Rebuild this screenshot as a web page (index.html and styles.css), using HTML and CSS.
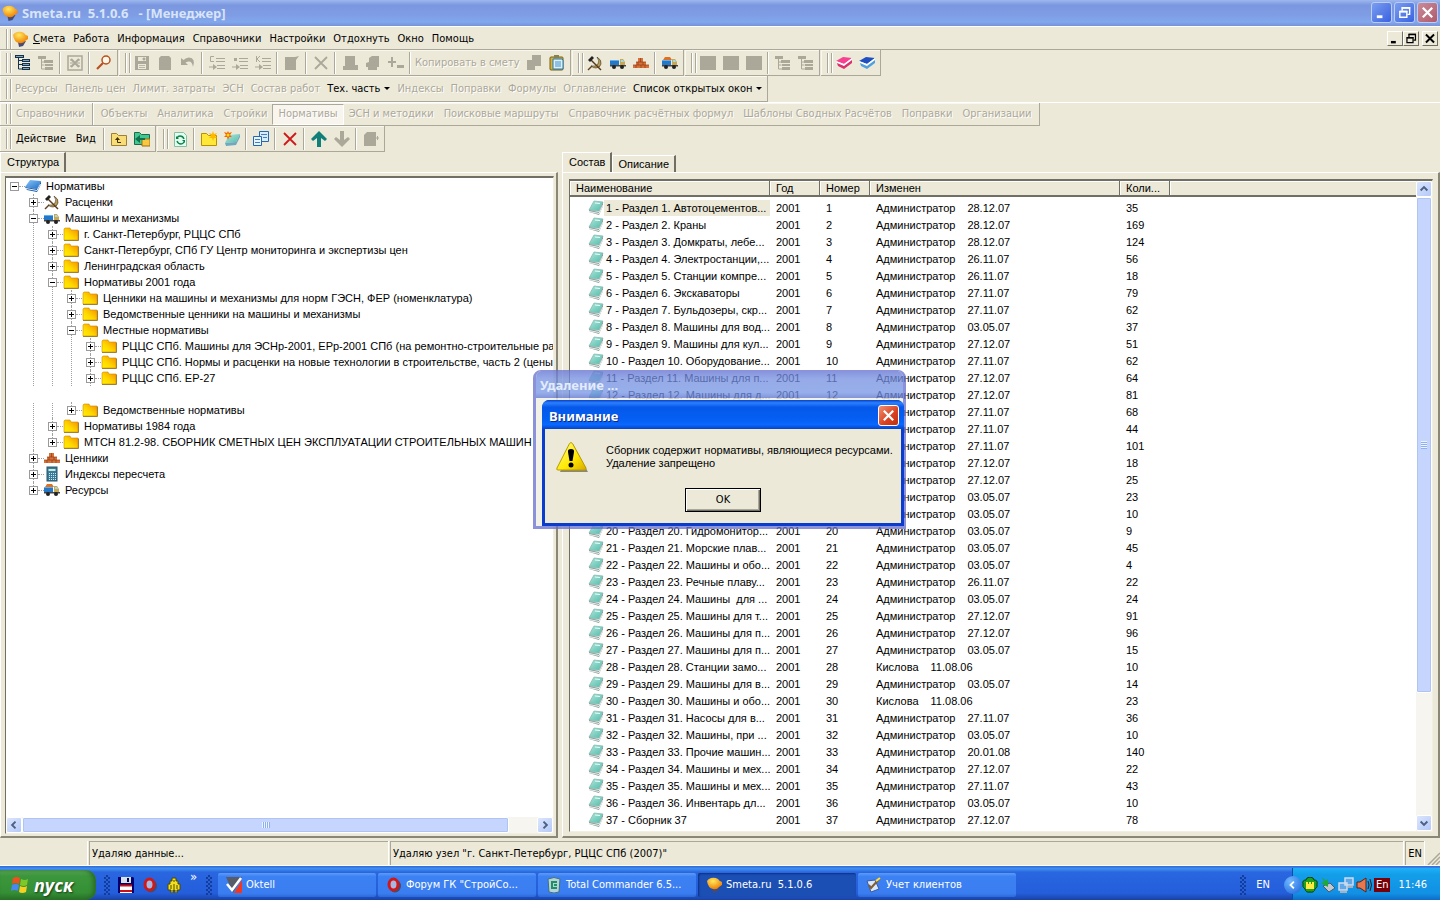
FILE: index.html
```
<!DOCTYPE html>
<html lang="ru">
<head>
  <meta charset="UTF-8" />
  <meta name="viewport" content="width=device-width, initial-scale=1.0" />
  <title>Smeta.ru 5.1.0.6 - [Менеджер]</title>
  <link rel="stylesheet" href="styles.css">
</head>
<body>

  <!-- icons -->
  <svg class="sprite" aria-hidden="true">
    <defs>
      <linearGradient id="gFolder" x1="1" y1="0" x2="0" y2="1"><stop offset="0" stop-color="#f58a00"/><stop offset=".6" stop-color="#ffd800"/><stop offset="1" stop-color="#fff200"/></linearGradient>
      <linearGradient id="gBook" x1="0" y1="0" x2="1" y2="1"><stop offset="0" stop-color="#b4e6dc"/><stop offset="1" stop-color="#4fbcaa"/></linearGradient>
      <linearGradient id="gBlue" x1="0" y1="0" x2="1" y2="1"><stop offset="0" stop-color="#8cc8f8"/><stop offset="1" stop-color="#1c6cc8"/></linearGradient>
      <radialGradient id="gSun" cx=".4" cy=".3" r=".7"><stop offset="0" stop-color="#ffe860"/><stop offset="1" stop-color="#f08000"/></radialGradient>
      <linearGradient id="gWarn" x1="0" y1="0" x2="1" y2="1"><stop offset="0" stop-color="#fffc90"/><stop offset=".6" stop-color="#ffe800"/><stop offset="1" stop-color="#d8a800"/></linearGradient>
    </defs>
    <symbol id="logo" viewBox="0 0 16 16"><path d="M6 11l8-1-3 5-4 1z" fill="#454a78"/><path d="M1 4q1-2 4-3 4-1 7 1 1 2 4 3v3l-3 2q-2 3-6 2-5-1-6-8z" fill="url(#gSun)"/></symbol>
    <symbol id="folder" viewBox="0 0 16 16"><path d="M1 14V3l1-1h5l1 2h7v10z" fill="url(#gFolder)" stroke="#d08a00" stroke-width=".6"/><path d="M1 14.500h14.500V4.500" fill="none" stroke="#a08030"/></symbol>
    <symbol id="book" viewBox="0 0 16 16"><path d="M6 1l9 1-4 9-10-1z" fill="url(#gBook)" stroke="#7cb4aa" stroke-width=".7"/><path d="M1 10l10 2 4-10v4l-4 9-10-3z" fill="#8d9c98"/><path d="M1 11.500l10 2L15 5" fill="none" stroke="#f4faf8" stroke-width=".9"/><path d="M7 3l5 .5" stroke="#e8fff8"/></symbol>
    <symbol id="bluebook" viewBox="0 0 16 16"><path d="M5 2l11 1-4 8L0 9z" fill="url(#gBlue)"/><path d="M0 9l12 2 4-8v3l-4 8-10-2z" fill="#1858a8"/><path d="M1 10.500l11 2L15.500 6" fill="none" stroke="#e4f0ff"/></symbol>
    <symbol id="hammer" viewBox="0 0 16 16"><path d="M10 2q5 3 4 7-1 4-5 4-3 0-5-2 5 1 7-2t-1-7z" fill="#b89c5c" stroke="#403418" stroke-width=".6"/><path d="M4 5l10 10" stroke="#5a3818" stroke-width="1.400"/><path d="M1 5l4-4 2 2-4 4z" fill="#222"/><path d="M5 11l-4 4" stroke="#604020" stroke-width="1.400"/></symbol>
    <symbol id="truck" viewBox="0 0 16 16"><path d="M0 5h9v5H0z" fill="#2378c8"/><path d="M0 5h9v1H0z" fill="#60b0f0"/><path d="M10 4h3l2 3v4h-5z" fill="#c8a850"/><path d="M11 5h2l1 2h-3z" fill="#9adcf8"/><path d="M0 10h16v1.500H0z" fill="#444"/><circle cx="4" cy="12" r="2" fill="#222"/><circle cx="12" cy="12" r="2" fill="#222"/></symbol>
    <symbol id="truckfull" viewBox="0 0 16 16"><path d="M1 5l2-3h5l2 3z" fill="#e07020"/><use href="#truck"/></symbol>
    <symbol id="bricks" viewBox="0 0 16 16"><path d="M5 3h5v4h3v3h3v3H0v-3h3V7h2z" fill="#d87038"/><path d="M0 10h16M3 7h10M7.500 3v4M5 7v3m5-3v3M3 10v3m5-3v3m4-3v3" stroke="#8c3c18" stroke-width=".7"/></symbol>
    <symbol id="calc" viewBox="0 0 16 16"><rect x="3" y="1" width="10" height="14" fill="#397c9c" stroke="#285468"/><path d="M4.500 3h7v2h-7z" fill="#c4ecd8"/><path d="M5 7.500h7M5 9.500h7m-7 2h7m-7 2h7" stroke="#d0e8f0" stroke-dasharray="1 1"/></symbol>
    <symbol id="branch" viewBox="0 0 16 16"><path d="M0 1.500h6M3.500 2v12h4M3.500 5.500h4m-4 4h4" fill="none" stroke="currentColor"/><path d="M7 4h8v3H7zm0 4h8v3H7zm0 4h8v3H7zM0 0h9v3H0z" fill="currentColor"/><path d="M8 5.500h6m-6 4h6m-6 4h6M1 1.500h7" stroke="#9fc4d4" stroke-width=".8"/></symbol>
    <symbol id="branchgray" viewBox="0 0 16 16"><path d="M0 1h8v3H0zm6 4h9v3H6zm1 4h8v2H7zm0 3h8v3H7z" fill="currentColor"/><path d="M3.500 4v10h4M3.500 7h3m-3 3h3" fill="none" stroke="currentColor"/></symbol>
    <symbol id="excel" viewBox="0 0 16 16"><path d="M1 1h14v14H1z" fill="none" stroke="currentColor" stroke-width="1.500"/><path d="M4 4l8 8M12 4l-8 8" stroke="currentColor" stroke-width="2.200"/><path d="M3 5h2m6 0h2M3 8h3m4 0h3M3 11h2m6 0h2" stroke="currentColor"/></symbol>
    <symbol id="lens" viewBox="0 0 16 16"><circle cx="10" cy="5" r="4" fill="#fff8e8" stroke="#b85020" stroke-width="1.500"/><path d="M7 8l-6 6" stroke="#b85020" stroke-width="2.200"/></symbol>
    <symbol id="disk" viewBox="0 0 16 16"><path d="M1 1h14v14H1z" fill="currentColor"/><path d="M4 2h8v4H4zm0 7h8v5H4z" fill="#ece9d8"/><path d="M9 3h2v2H9zM5 10.500h6m-6 2h6" fill="currentColor" stroke="currentColor" stroke-width=".8"/></symbol>
    <symbol id="sheet" viewBox="0 0 16 16"><path d="M4 1h8l2 2v12H2V3z" fill="currentColor"/></symbol>
    <symbol id="undo" viewBox="0 0 16 16"><path d="M1 3v7h7L5.500 7.500Q12 4 13 12q3-9-4-9.500-3 0-5.500 2.500z" fill="currentColor"/></symbol>
    <symbol id="insert" viewBox="0 0 16 16"><path d="M7 3.500h9M7 6.500h9M8 10.500h8M8 13.500h8M0 12h6" stroke="currentColor" stroke-width="1.200"/><path d="M4 9l4 3-4 3z" fill="currentColor"/></symbol>
    <symbol id="insC" viewBox="0 0 16 16"><use href="#insert"/><path d="M5 1.500H1.500v5H5" fill="none" stroke="currentColor"/></symbol>
    <symbol id="insDot" viewBox="0 0 16 16"><use href="#insert"/><path d="M2 3h3v3H2z" fill="currentColor"/></symbol>
    <symbol id="insK" viewBox="0 0 16 16"><use href="#insert"/><path d="M1.500 1v6M5 1L2 4l3 3" fill="none" stroke="currentColor"/></symbol>
    <symbol id="edit" viewBox="0 0 16 16"><path d="M1 2h10l4-1-3 4v10H1z" fill="currentColor"/></symbol>
    <symbol id="cross" viewBox="0 0 16 16"><path d="M2 2l12 12M14 2L2 14" stroke="currentColor" stroke-width="1.800"/></symbol>
    <symbol id="stamp" viewBox="0 0 16 16"><path d="M3 1h10v9h3v5H1v-4h2z" fill="currentColor"/></symbol>
    <symbol id="stamp2" viewBox="0 0 16 16"><path d="M4 3l3-2h7v11h-2v3H3v-3H1V8l3-1z" fill="currentColor"/></symbol>
    <symbol id="plusminus" viewBox="0 0 16 16"><path d="M0 6h3V2h2v4h3v2H5v4H3V8H0zm9 4h7v3H9z" fill="currentColor"/></symbol>
    <symbol id="copy" viewBox="0 0 16 16"><path d="M6 0h9v11H9v4H1V5h5z" fill="currentColor"/></symbol>
    <symbol id="paste" viewBox="0 0 16 16"><rect x="1" y="2" width="13" height="13" rx="1" fill="#d8b040" stroke="#706018"/><path d="M5 0h5v3H5z" fill="#888050"/><path d="M4 4h9l1 1v9H4z" fill="#d8f0ff" stroke="#2878a8"/><path d="M6 7h6m-6 2h6m-6 2h6" stroke="#4890c0"/></symbol>
    <symbol id="block" viewBox="0 0 16 16"><path d="M0 1h16v14H0z" fill="currentColor"/></symbol>
    <symbol id="pinkbook" viewBox="0 0 16 16"><path d="M0 6l7-4 9 1-8 6z" fill="#f84090"/><path d="M0 6l8 3 8-6v2l-8 6-7-3z" fill="#fff"/><path d="M1 8l7 3 8-6v3l-8 6-6-3z" fill="#d83070"/></symbol>
    <symbol id="navybook" viewBox="0 0 16 16"><path d="M0 6l7-4 9 1-8 6z" fill="#2050c0"/><path d="M0 6l8 3 8-6v2l-8 6-7-3z" fill="#fff"/><path d="M1 8l7 3 8-6v3l-8 6-6-3z" fill="#50a0e0"/></symbol>
    <symbol id="folderup" viewBox="0 0 16 16"><path d="M.5 14.500v-12h5l2 2h8v10z" fill="#f8dc78" stroke="#a08030"/><path d="M6.500 8v3.500H10" fill="none" stroke="#403000"/><path d="M4 9l2.500-3L9 9z" fill="#403000"/></symbol>
    <symbol id="folderback" viewBox="0 0 16 16"><path d="M.5 13.500v-12h5l2 2h8v10z" fill="#40c890" stroke="#206850"/><path d="M8 8h8v7H8z" fill="#f8c840" stroke="#a07010"/><path d="M11 7H6V4L1 8l5 4V9h5z" fill="#107050"/></symbol>
    <symbol id="refresh" viewBox="0 0 16 16"><path d="M2.500 1.500h9l3 3v11h-12z" fill="#e0fff0" stroke="#88bca4"/><path d="M12 8q-1-3-4-3-2 0-3 2M5 10q1 3 4 3 2 0 3-2" fill="none" stroke="#108048" stroke-width="1.400"/><path d="M4 5v3h3zm9 7V9h-3z" fill="#108048"/></symbol>
    <symbol id="foldernew" viewBox="0 0 16 16"><path d="M.5 14.500v-12h5l2 2h8v10z" fill="#ffe838" stroke="#b89000"/><path d="M12 0l1 3 3-1-2 3 2 2-3 0-1 3-1-3-3 0 2-2-2-3 3 1z" fill="#ffb800"/></symbol>
    <symbol id="booknew" viewBox="0 0 16 16"><path d="M5 4l11-1-4 8-11 1z" fill="url(#gBook)"/><path d="M1 12l11-1 4-8v3l-4 8-10 1z" fill="#70a8c0"/><path d="M4 0l1 2 3-1-2 3 2 2-3 0-1 3-1-3-3 0 2-2-2-3 3 1z" fill="#f86000"/><circle cx="4" cy="4" r="1.500" fill="#ffe000"/></symbol>
    <symbol id="windows" viewBox="0 0 16 16"><path d="M6.500.5h9v10h-9z" fill="#d8ecff" stroke="#2868a8"/><path d="M.5 5.500h8v9h-8z" fill="#e8f4ff" stroke="#2868a8"/><path d="M8 3.500h6M10 6.500h4M2 8.500h5m-5 3h5" stroke="#4080c0"/></symbol>
    <symbol id="up" viewBox="0 0 16 16"><path d="M8 0l8 8-2 2-4-3v9H6V7l-4 3-2-2z" fill="currentColor"/></symbol>
    <symbol id="down" viewBox="0 0 16 16"><path d="M8 16l8-8-2-2-4 3V0H6v9L2 6 0 8z" fill="currentColor"/></symbol>
    <symbol id="door" viewBox="0 0 16 16"><path d="M4 1h9v14H1V4z" fill="currentColor"/><path d="M13 7h3M14.500 5v4" stroke="currentColor"/></symbol>
    <symbol id="opera" viewBox="0 0 16 16"><ellipse cx="9" cy="9" rx="6" ry="6.500" fill="#444c70"/><ellipse cx="7.500" cy="7.500" rx="4.500" ry="5.500" fill="#a8b8e0" stroke="#d01818" stroke-width="3"/></symbol>
    <symbol id="flag" viewBox="0 0 20 20"><path d="M3 3q4-2 7 0L9 9q-4-2-7 0z" fill="#f05020"/><path d="M11 4q4 2 7 0l-1 6q-4 2-7 0z" fill="#80c828"/><path d="M2 10q4-2 7 0l-1 6q-4-2-7 0z" fill="#4888f0"/><path d="M10 11q4 2 7 0l-1 6q-4 2-7 0z" fill="#f8d020"/></symbol>
    <symbol id="floppy" viewBox="0 0 16 16"><path d="M0 0h15l1 1v15H0z" fill="#000070"/><path d="M3 0h10v6H3z" fill="#d8e0e8"/><path d="M9 1h2v4H9z" fill="#000050"/><path d="M2 8h12v8H2z" fill="#fff"/><path d="M2 8.500h12M2 14h12" stroke="#d01010" stroke-width="2"/></symbol>
    <symbol id="qip" viewBox="0 0 16 16"><path d="M6 1h4v3h2v3h2v6h-3v3H9v-3H7v3H5v-3H2V7h2V4h2z" fill="#f0e020" stroke="#504800"/><path d="M5 8v4m3-5v5m3-4v4M7 4h2" stroke="#504800" stroke-width="1"/></symbol>
    <symbol id="oktell" viewBox="0 0 16 16"><path d="M0 0h16L7 16z" fill="#585c68"/><path d="M8 16l8-13v13z" fill="#f03820"/><path d="M1 7l5 6L15 1" fill="none" stroke="#fff" stroke-width="2.500"/></symbol>
    <symbol id="recycle" viewBox="0 0 16 16"><path d="M2 2q6-3 12 0l-1 13q-5 2-10 0z" fill="#b4d4dc" stroke="#447078"/><path d="M11 5H6v6h5M8 8h3" fill="none" stroke="#209060" stroke-width="2"/></symbol>
    <symbol id="pencil" viewBox="0 0 16 16"><path d="M1 4l8-1 4 9-8 3z" fill="#d8e8ff" stroke="#405898"/><path d="M3 8l2 3L14 1" fill="none" stroke="#806030" stroke-width="2"/><path d="M10 4l4-3" stroke="#ffe040" stroke-width="2"/></symbol>
    <symbol id="clover" viewBox="0 0 16 16"><path d="M5 1q3-2 6 0l1 2q4 0 3 4 1 3-2 5-1 4-5 3-4 1-5-3-3-2-2-5-1-4 3-4z" fill="#20a020" stroke="#084008"/><path d="M4 5h2v2h1V5h2v2h1V5h2v7H4z" fill="#ffe840"/></symbol>
    <symbol id="usb" viewBox="0 0 16 16"><path d="M3 9l7-3 5 5-6 4z" fill="#c0c8d0" stroke="#505868"/><path d="M2 0l2 5-3 1 7 4V2L6 4z" fill="#20a838"/></symbol>
    <symbol id="net" viewBox="0 0 16 16"><path d="M7 1h8v7H7zM1 6h8v7H1z" fill="#60a8e8" stroke="#d0dcec" stroke-width="1.500"/><path d="M2 15h7M10 10h5" stroke="#a8b0c0" stroke-width="2"/></symbol>
    <symbol id="sound" viewBox="0 0 16 16"><path d="M1 5h3l6-4v14l-6-4H1z" fill="#e87850" stroke="#602010"/><path d="M12 4q2 4 0 8m2-10q3 6 0 12" fill="none" stroke="#222"/></symbol>
    <symbol id="wmin" viewBox="0 0 16 16"><path d="M3 11h6v3H3z" fill="currentColor"/></symbol>
    <symbol id="wmax" viewBox="0 0 16 16"><path d="M5.500 6V3h8v7H11" fill="none" stroke="currentColor" stroke-width="1.500"/><path d="M5 3h9M3 7h8" stroke="currentColor" stroke-width="2"/><path d="M3 7h7.500v6H3z" fill="none" stroke="currentColor" stroke-width="1.500"/></symbol>
    <symbol id="wclose" viewBox="0 0 16 16"><path d="M3 3l10 10M13 3L3 13" stroke="currentColor" stroke-width="2.400"/></symbol>
    <symbol id="chev" viewBox="0 0 16 16"><path d="M3.500 10L8 5.500l4.500 4.500" fill="none" stroke="#4d6185" stroke-width="2.600"/></symbol>
    <symbol id="warn" viewBox="0 0 32 32"><path d="M17 3L32 31H4z" fill="#8c8878"/><path d="M13.500 2.500q1.500-2 3 0L30 27q.5 2-1.500 2H2Q0 29 1 27z" fill="url(#gWarn)" stroke="#b89c00"/><path d="M15 8q3.500 0 3 3l-1.500 9h-3L12 11q-.5-3 3-3z" fill="#000"/><circle cx="15" cy="24" r="2.500" fill="#000"/></symbol>
  </svg>

  <header class="titlebar">
    <svg class="ico"><use href="#logo"/></svg>
    <h1>Smeta.ru  5.1.0.6   - [Менеджер]</h1>
    <button class="winbtn" aria-label="Свернуть"><svg><use href="#wmin"/></svg></button>
    <button class="winbtn" aria-label="Восстановить"><svg><use href="#wmax"/></svg></button>
    <button class="winbtn close" aria-label="Закрыть"><svg><use href="#wclose"/></svg></button>
  </header>

  <nav class="menubar">
    <i class="grip"></i>
    <svg class="ico"><use href="#logo"/></svg>
    <button><u>С</u>мета</button><button>Работа</button><button>Информация</button><button>Справочники</button><button>Настройки</button><button>Отдохнуть</button><button>Окно</button><button>Помощь</button>
    <div class="mdi">
      <button aria-label="Свернуть окно"><svg><use href="#wmin"/></svg></button>
      <button aria-label="Восстановить окно"><svg><use href="#wmax"/></svg></button>
      <button aria-label="Закрыть окно"><svg><use href="#wclose"/></svg></button>
    </div>
  </nav>

  <div class="dock">
    <div class="bar icons">
      <i class="grip"></i>
      <button aria-label="Дерево" class="navy"><svg><use href="#branch"/></svg></button><button aria-label="Ветка" disabled><svg><use href="#branchgray"/></svg></button><i class="sep"></i><button aria-label="Excel" disabled><svg><use href="#excel"/></svg></button><i class="sep"></i><button aria-label="Поиск"><svg><use href="#lens"/></svg></button>
    </div>
    <div class="bar icons">
      <i class="grip"></i>
      <button aria-label="Сохранить" disabled><svg><use href="#disk"/></svg></button><button aria-label="Лист" disabled><svg><use href="#sheet"/></svg></button><button aria-label="Отменить" disabled><svg><use href="#undo"/></svg></button><i class="sep"></i><button aria-label="Вставить C" disabled><svg><use href="#insC"/></svg></button><button aria-label="Вставить" disabled><svg><use href="#insDot"/></svg></button><button aria-label="Вставить K" disabled><svg><use href="#insK"/></svg></button><i class="sep"></i><button aria-label="Изменить" disabled><svg><use href="#edit"/></svg></button><i class="sep"></i><button aria-label="Удалить" disabled><svg><use href="#cross"/></svg></button><i class="sep"></i><button aria-label="Штамп" disabled><svg><use href="#stamp"/></svg></button><button aria-label="Перенос" disabled><svg><use href="#stamp2"/></svg></button><button aria-label="Плюс-минус" disabled><svg><use href="#plusminus"/></svg></button><i class="sep"></i><button class="txt" disabled>Копировать в смету</button><button aria-label="Копировать" disabled><svg><use href="#copy"/></svg></button><button aria-label="Вставить из буфера"><svg><use href="#paste"/></svg></button>
    </div>
    <div class="bar icons">
      <i class="grip"></i>
      <button aria-label="Расценки"><svg><use href="#hammer"/></svg></button><button aria-label="Машины"><svg><use href="#truck"/></svg></button><button aria-label="Материалы"><svg><use href="#bricks"/></svg></button><i class="sep"></i><button aria-label="Ресурсы"><svg><use href="#truckfull"/></svg></button>
    </div>
    <div class="bar icons">
      <i class="grip"></i>
      <button aria-label="Вид 1" disabled><svg><use href="#block"/></svg></button><button aria-label="Вид 2" disabled><svg><use href="#block"/></svg></button><button aria-label="Вид 3" disabled><svg><use href="#block"/></svg></button><i class="sep"></i><button aria-label="Развернуть" disabled><svg><use href="#branchgray"/></svg></button><button aria-label="Свернуть ветку" disabled><svg><use href="#branchgray"/></svg></button>
    </div>
    <div class="bar icons">
      <i class="grip"></i>
      <button aria-label="Книга"><svg><use href="#pinkbook"/></svg></button><button aria-label="Справка"><svg><use href="#navybook"/></svg></button>
    </div>
  </div>

  <div class="dock">
    <div class="bar words">
      <i class="grip"></i>
      <button disabled>Ресурсы</button><button disabled>Панель цен</button><button disabled>Лимит. затраты</button><button disabled>ЭСН</button><button disabled>Состав работ</button><button class="drop">Тех. часть</button><button disabled>Индексы</button><button disabled>Поправки</button><button disabled>Формулы</button><button disabled>Оглавление</button><button class="drop">Список открытых окон</button>
    </div>
  </div>

  <div class="dock line">
    <div class="bar sections">
      <i class="grip"></i>
      <button disabled>Справочники</button><i class="sep"></i><button disabled>Объекты</button><button disabled>Аналитика</button><button disabled>Стройки</button><button class="pressed" disabled>Нормативы</button><button disabled>ЭСН и методики</button><button disabled>Поисковые маршруты</button><button disabled>Справочник расчётных формул</button><button disabled>Шаблоны Сводных Расчётов</button><button disabled>Поправки</button><button disabled>Организации</button>
    </div>
  </div>

  <div class="dock">
    <div class="bar icons actions">
      <i class="grip"></i>
      <button class="txt">Действие</button><button class="txt">Вид</button><i class="sep"></i><button aria-label="Вверх"><svg><use href="#folderup"/></svg></button><button aria-label="Назад"><svg><use href="#folderback"/></svg></button>
    </div>
    <div class="bar icons">
      <i class="grip"></i>
      <button aria-label="Обновить"><svg><use href="#refresh"/></svg></button><i class="sep"></i><button aria-label="Новая папка"><svg><use href="#foldernew"/></svg></button><button aria-label="Новый сборник"><svg><use href="#booknew"/></svg></button><i class="sep"></i><button aria-label="Окна"><svg><use href="#windows"/></svg></button><i class="sep"></i><button aria-label="Удалить запись" class="red"><svg><use href="#cross"/></svg></button><i class="sep"></i><button aria-label="Выше" class="teal"><svg><use href="#up"/></svg></button><button aria-label="Ниже" disabled><svg><use href="#down"/></svg></button><i class="sep"></i><button aria-label="Выход" disabled><svg><use href="#door"/></svg></button>
    </div>
  </div>

  <main>
    <section class="pane left">
      <div class="tabs"><button class="tab on">Структура</button></div>
      <div class="sheet">
        <div class="well">
          <div class="tree" id="norms"></div>
          <div class="hscroll">
            <button aria-label="Влево"><svg class="r270"><use href="#chev"/></svg></button>
            <div class="thumb"><i></i></div>
            <div class="rest"></div>
            <button aria-label="Вправо"><svg class="r90"><use href="#chev"/></svg></button>
          </div>
        </div>
      </div>
    </section>

    <section class="pane right">
      <div class="tabs"><button class="tab on">Состав</button><button class="tab">Описание</button></div>
      <div class="sheet">
        <div class="well list">
          <div class="grid">
            <table>
              <colgroup><col class="c-name"><col class="c-small"><col class="c-small"><col class="c-date"><col class="c-small"><col></colgroup>
              <thead><tr><th>Наименование</th><th>Год</th><th>Номер</th><th>Изменен</th><th>Коли...</th><th></th></tr></thead>
              <tbody id="rows"></tbody>
            </table>
          </div>
          <div class="vscroll">
            <button aria-label="Прокрутить вверх"><svg><use href="#chev"/></svg></button>
            <div class="thumb"><i></i></div>
            <div class="rest"></div>
            <button aria-label="Прокрутить вниз"><svg class="r180"><use href="#chev"/></svg></button>
          </div>
        </div>
      </div>
    </section>
  </main>

  <div class="statusbar">
    <span class="cell first"></span>
    <span class="cell second">Удаляю данные...</span>
    <span class="cell third">Удаляю узел "г. Санкт-Петербург, РЦЦС СПб (2007)"</span>
    <span class="cell">EN</span>
    <svg class="size" viewBox="0 0 14 14"><path d="M2 14L14 2M6 14l8-8M10 14l4-4" stroke="#aca899" stroke-width="1.500"/></svg>
  </div>

  <footer class="taskbar">
    <button class="start"><svg><use href="#flag"/></svg>пуск</button>
    <div class="quick">
      <i class="dots"></i>
      <button aria-label="Диск"><svg><use href="#floppy"/></svg></button>
      <button aria-label="Opera"><svg><use href="#opera"/></svg></button>
      <button aria-label="QIP"><svg><use href="#qip"/></svg></button>
      <span>»</span>
      <i class="dots"></i>
    </div>
    <div class="tasks">
      <button><svg><use href="#oktell"/></svg>Oktell</button>
      <button><svg><use href="#opera"/></svg>Форум ГК "СтройСо...</button>
      <button><svg><use href="#recycle"/></svg>Total Commander 6.5...</button>
      <button class="on"><svg><use href="#logo"/></svg>Smeta.ru  5.1.0.6</button>
      <button><svg><use href="#pencil"/></svg>Учет клиентов</button>
    </div>
    <div class="lang"><i class="dots"></i><span>EN</span></div>
    <div class="tray">
      <button class="hide" aria-label="Скрыть значки"><svg class="r270" viewBox="0 0 16 16"><path d="M3 10l5-5 5 5" fill="none" stroke="#fff" stroke-width="2.600"/></svg></button>
      <svg><use href="#clover"/></svg><svg><use href="#usb"/></svg><svg><use href="#net"/></svg><svg><use href="#sound"/></svg>
      <span class="kb">En</span>
      <span class="clock">11:46</span>
    </div>
  </footer>

  <div class="ghost">
    <div class="ghost-title">Удаление ...</div>
    <div class="ghost-body"></div>
  </div>

  <div class="dialog" role="alertdialog" aria-labelledby="dlg-title">
    <div class="dlg-title">
      <span id="dlg-title">Внимание</span>
      <button aria-label="Закрыть сообщение"><svg><use href="#wclose"/></svg></button>
    </div>
    <div class="dlg-body">
      <div class="msg">
        <svg><use href="#warn"/></svg>
        <p>Сборник содержит нормативы, являющиеся ресурсами.<br>Удаление запрещено</p>
      </div>
      <button class="ok">OK</button>
    </div>
  </div>

  <script src="script.js"></script>
</body>
</html>
```
FILE: styles.css
```
* {
  box-sizing: border-box;
}
body {
  margin: 0;
  height: 100vh;
  display: flex;
  flex-direction: column;
  position: relative;
  overflow: hidden;
  background: #ece9d8;
  color: #000;
  font: 11px/14px "DejaVu Sans Condensed", "Noto Sans", sans-serif;
}
button {
  font: inherit;
  color: inherit;
  margin: 0;
  padding: 0;
  border: 0;
  background: none;
  white-space: pre;
}
svg {
  width: 16px;
  height: 16px;
  flex: none;
  display: block;
}
.sprite {
  position: absolute;
  width: 0;
  height: 0;
}
.r90 { transform: rotate(90deg); }
.r180 { transform: rotate(180deg); }
.r270 { transform: rotate(270deg); }

/* title */
.titlebar {
  height: 27px;
  flex: none;
  display: flex;
  align-items: center;
  gap: 2px;
  padding: 0 2px 1px 1px;
  border-bottom: 1px solid #fff;
  background: linear-gradient(#9db8ee, #7b97e0 20%, #7f9de5 60%, #82a8ec 85%, #7a90d8);
}
.titlebar .ico {
  width: 17px;
}
.titlebar h1 {
  flex: 1;
  margin: 0;
  padding-left: 2px;
  font: bold 13px/18px "Noto Sans", sans-serif;
  color: #d8e4f8;
  white-space: pre;
}
.winbtn {
  width: 21px;
  height: 21px;
  padding: 2px;
  border: 1px solid #b9cdf5;
  border-radius: 3px;
  color: #fff;
  background: linear-gradient(135deg, #7a9df0, #3a62e0);
}
.winbtn svg {
  width: 15px;
  height: 15px;
}
.winbtn.close {
  background: linear-gradient(135deg, #c98b98, #b05a6c);
}

/* menu and toolbars */
.menubar {
  height: 23px;
  flex: none;
  display: flex;
  align-items: center;
  padding: 1px 2px 0 6px;
  border-bottom: 1px solid #aca899;
}
.grip {
  width: 5px;
  height: 20px;
  flex: none;
  border: 1px solid #aca899;
  border-width: 0 1px;
  box-shadow: inset 1px 0 #fff, inset -1px 0 #ece9d8, 1px 0 #fff;
}
.menubar .ico {
  margin: 0 1px;
}
.menubar > button {
  padding: 0 4px;
}
.mdi {
  margin-left: auto;
  display: flex;
}
.mdi button {
  width: 16px;
  height: 15px;
  padding: 0;
  border: 1px solid #fff;
  border-right-color: #716f64;
  border-bottom-color: #716f64;
}
.mdi button:last-child {
  margin-left: 3px;
}
.mdi svg {
  width: 14px;
  height: 13px;
}
.dock {
  height: 26px;
  flex: none;
  display: flex;
  gap: 1px;
}
.dock.line {
  height: 24px;
  border-top: 1px solid #fff;
}
.bar {
  display: flex;
  align-items: center;
  padding: 0 2px 0 6px;
  border: solid #aca899;
  border-width: 0 1px 1px 0;
  box-shadow: inset 0 1px #f8f7f0, inset 1px 0 #f8f7f0;
}
.icons button {
  width: 23px;
  height: 22px;
  padding: 3px 4px;
}
.icons button.txt {
  width: auto;
  padding: 0 2px;
}
.actions button.txt {
  padding: 0 5px;
}
button:disabled {
  color: #aca899;
  text-shadow: 1px 1px #fff;
}
.navy { color: #14324c; }
.red { color: #d01818; }
.teal { color: #108078; }
.sep {
  width: 2px;
  height: 22px;
  margin: 0 2px;
  border-left: 1px solid #aca899;
  border-right: 1px solid #fff;
}
.words button {
  padding: 0 3px 0 4px;
}
.drop::after {
  content: "";
  display: inline-block;
  margin-left: 4px;
  vertical-align: 2px;
  border: 3px solid transparent;
  border-top-color: #000;
  border-bottom: 0;
}
.sections button {
  height: 21px;
  padding: 0 5px;
}
.sections .pressed {
  border: 1px solid #aca899;
  border-right-color: #fff;
  border-bottom-color: #fff;
  background: #f7f5ee;
}

/* panes */
main {
  flex: 1;
  min-height: 0;
  display: flex;
  gap: 4px;
  font: 11px/16px "Liberation Sans", Arial, sans-serif;
}
.pane {
  min-width: 0;
  display: flex;
  flex-direction: column;
}
.left {
  width: 38.75%;
}
.right {
  flex: 1;
}
.tabs {
  height: 20px;
  flex: none;
  display: flex;
  align-items: flex-end;
}
.tab {
  height: 17px;
  padding: 0 5px;
  border: solid #fff;
  border-width: 1px 2px 0 1px;
  border-right-color: #716f64;
}
.tab.on {
  height: 20px;
  padding: 0 5px 2px 6px;
}
.sheet {
  flex: 1;
  min-height: 0;
  display: flex;
  padding: 3px 2px 2px 4px;
  border: solid #fff;
  border-width: 1px 2px 2px 1px;
  border-right-color: #8a8776;
  border-bottom-color: #8a8776;
}
.right .sheet {
  padding: 6px 5px 4px 6px;
}
.well {
  flex: 1;
  min-width: 0;
  display: flex;
  flex-direction: column;
  background: #fff;
  border: solid #716f64;
  border-width: 2px 1px 1px 1px;
  border-right-color: #f1efe2;
  border-bottom-color: #f1efe2;
}
.well.list {
  flex-direction: row;
}
.tree {
  flex: 1;
  overflow: hidden;
  isolation: isolate;
  white-space: nowrap;
}
.tree ul {
  margin: 0;
  padding: 0 0 0 19px;
  list-style: none;
}
.tree > ul {
  padding-left: 4px;
}
.tree li {
  position: relative;
}
.tree ul ul > li::before {
  content: "";
  position: absolute;
  left: 4px;
  top: 0;
  bottom: 0;
  border-left: 1px dotted #a0a0a0;
}
.tree ul ul > li:last-child::before {
  bottom: auto;
  height: 8px;
}
.node {
  height: 16px;
  display: flex;
  align-items: center;
}
.box {
  position: relative;
  width: 9px;
  height: 9px;
  flex: none;
  border: 1px solid #9a9a9a;
  background: linear-gradient(#000, #000) center / 5px 1px no-repeat #fff;
}
.box.plus {
  background: linear-gradient(#000, #000) center / 5px 1px no-repeat, linear-gradient(#000, #000) center / 1px 5px no-repeat #fff;
}
.node::after {
  content: "";
  order: 1;
  flex: none;
  width: 6px;
  border-top: 1px dotted #a0a0a0;
}
.node svg {
  order: 2;
}
.node span {
  order: 3;
  padding-left: 5px;
}
/* row that has not been repainted yet */
.tree li.gap {
  height: 16px;
  margin-left: -76px;
  z-index: 1;
  background: #fff;
}
.tree ul ul > li.gap::before {
  display: none;
}

/* scrollbars */
.hscroll,
.vscroll {
  flex: none;
  display: flex;
  background: #f6f5f0;
}
.hscroll {
  height: 16px;
}
.vscroll {
  width: 16px;
  flex-direction: column;
}
.hscroll button,
.vscroll button {
  width: 16px;
  height: 16px;
  flex: none;
  padding: 1px;
  border: 1px solid #fff;
  border-radius: 2px;
  background: linear-gradient(135deg, #dce6fd, #b4c9f8);
}
.hscroll button svg,
.vscroll button svg {
  width: 12px;
  height: 12px;
}
.thumb {
  display: flex;
  align-items: center;
  justify-content: center;
  border: 1px solid #fff;
  border-radius: 2px;
  box-shadow: inset 0 0 0 1px #b0c4f4;
  background: #c6d5fd;
}
.hscroll .thumb { flex: 487; }
.hscroll .rest { flex: 28; }
.vscroll .thumb { flex: 495; }
.vscroll .rest { flex: 122; }
.hscroll .thumb i {
  width: 8px;
  height: 6px;
  background: repeating-linear-gradient(90deg, #eef4fe 0 1px, #8cb0f8 1px 2px);
}
.vscroll .thumb i {
  width: 6px;
  height: 8px;
  background: repeating-linear-gradient(#eef4fe 0 1px, #8cb0f8 1px 2px);
}

/* table */
.grid {
  flex: 1;
  min-width: 0;
  overflow: hidden;
}
table {
  width: 100%;
  table-layout: fixed;
  border-spacing: 0;
}
.c-name { width: 200px; }
.c-small { width: 50px; }
.c-date { width: 250px; }
th {
  height: 16px;
  padding: 0 6px;
  font-weight: normal;
  line-height: 14px;
  text-align: left;
  background: #ece9d8;
  border: solid #716f64;
  border-width: 0 1px 2px 0;
  box-shadow: inset 1px 1px #fff;
}
th:last-child {
  border-right: 0;
}
tbody::before {
  content: "";
  display: table-row;
  height: 2px;
}
td {
  height: 17px;
  padding: 0 6px;
  line-height: 16px;
  white-space: pre;
}
td:first-child {
  padding: 0 0 0 18px;
}
.item {
  display: flex;
  height: 16px;
}
.item span {
  flex: 1;
  padding: 0 2px;
  overflow: hidden;
}
.item.sel span {
  background: #ece9d8;
}
.date {
  margin-left: 12px;
}

/* status bar */
.statusbar {
  height: 28px;
  flex: none;
  display: flex;
  padding-top: 3px;
  border-bottom: 1px solid #fff;
}
.cell {
  padding: 5px 2px;
  margin-right: 2px;
  border: solid #aca899;
  border-width: 1px 0 0 1px;
  box-shadow: 1px 0 #fff;
}
.first {
  width: 87px;
  border-color: transparent;
}
.second {
  width: 299px;
}
.third {
  flex: 1;
}
.size {
  width: 14px;
  height: 14px;
  align-self: flex-end;
}

/* taskbar */
.taskbar {
  height: 34px;
  flex: none;
  display: flex;
  align-items: stretch;
  color: #fff;
  background: linear-gradient(#3168d5, #4090f0 8%, #2a66e0 18%, #245edb 80%, #1941a5);
}
.start {
  width: 96px;
  margin-top: 4px;
  display: flex;
  align-items: center;
  gap: 4px;
  padding-left: 10px;
  border-radius: 0 10px 10px 0;
  font: italic bold 18px/22px "Open Sans", sans-serif;
  text-shadow: 1px 1px 2px #183818;
  background: linear-gradient(#5aa85a, #3c963c 20%, #359035 75%, #287028);
  box-shadow: inset -3px 0 4px #2a6c2a;
}
.start svg {
  width: 20px;
  height: 20px;
}
.dots {
  width: 6px;
  height: 20px;
  flex: none;
  background: conic-gradient(#143c9c 25%, transparent 0 50%, #143c9c 0 75%, transparent 0) 0 0 / 4px 4px;
}
.quick {
  display: flex;
  align-items: center;
  gap: 8px;
  width: 122px;
  margin-top: 4px;
  padding: 0 6px 0 8px;
}
.quick span {
  align-self: flex-start;
  font-size: 13px;
}
.quick .dots:last-child {
  margin-left: auto;
}
.tasks {
  flex: 1;
  display: flex;
  gap: 2px;
  padding: 7px 0 3px;
}
.tasks button {
  flex: 0 1 158px;
  display: flex;
  align-items: center;
  gap: 4px;
  padding-left: 8px;
  overflow: hidden;
  border-radius: 2px;
  background: linear-gradient(#5c9cf8, #3c81f3 15%, #3a7df0 85%, #2c68d8);
}
.tasks button.on {
  background: #1c4fb4;
  box-shadow: inset 1px 1px 2px #0c3080;
}
.lang {
  display: flex;
  align-items: center;
  gap: 10px;
  margin-top: 4px;
  padding-right: 22px;
}
.tray {
  display: flex;
  align-items: center;
  gap: 2px;
  margin-top: 2px;
  padding: 2px 13px 0 0;
  border-left: 1px solid #0c4ca8;
  background: linear-gradient(#20b0f8, #139ee9 20%, #1290e4 80%, #0c6cc8);
}
.hide {
  width: 18px;
  height: 18px;
  margin: 0 -2px 0 -9px;
  padding: 3px;
  border-radius: 50%;
  background: radial-gradient(circle at 35% 30%, #70b8ff, #1860d8);
}
.hide svg {
  width: 11px;
  height: 12px;
}
.kb {
  padding: 0 2px;
  background: #780008;
}
.clock {
  padding-left: 6px;
}

/* windows over the main one */
.ghost {
  position: absolute;
  left: calc(50% - 187px);
  top: calc(50% - 80px);
  width: 373px;
  height: 159px;
  display: flex;
  flex-direction: column;
  overflow: hidden;
  border: solid rgba(100, 110, 205, 0.75);
  border-width: 1px 3px 3px;
  border-radius: 8px 8px 0 0;
}
.ghost-title {
  height: 27px;
  padding: 5px 4px;
  font: bold 13px/18px "Noto Sans", sans-serif;
  color: #e4ecfc;
  background: linear-gradient(rgba(105, 120, 212, 0.8), rgba(115, 142, 224, 0.75) 30%, rgba(115, 148, 228, 0.75) 80%, rgba(100, 120, 208, 0.8));
}
.ghost-body {
  flex: 1;
  background: rgba(240, 238, 228, 0.85);
}
.dialog {
  position: absolute;
  left: calc(50% - 178px);
  top: calc(50% - 50px);
  width: 362px;
  border: solid #0a3cd0;
  border-width: 0 3px 3px;
  border-radius: 8px 8px 0 0;
  background: #0a3cd0;
}
.dlg-title {
  height: 29px;
  display: flex;
  align-items: center;
  justify-content: space-between;
  margin: 0 -3px;
  padding: 2px 5px 0 7px;
  border-radius: 7px 7px 0 0;
  font: bold 13px/18px "Noto Sans", sans-serif;
  color: #fff;
  text-shadow: 1px 1px #0a2a80;
  background: linear-gradient(#0842c8, #2a80ff 10%, #0558e8 25%, #0560f4 70%, #0a68ff 85%, #0444c8);
}
.dlg-title button {
  width: 21px;
  height: 21px;
  padding: 2px;
  border: 1px solid #fff;
  border-radius: 3px;
  background: linear-gradient(135deg, #f09070, #d84020 60%, #c03010);
}
.dlg-title button svg {
  width: 15px;
  height: 15px;
}
.dlg-body {
  display: flex;
  flex-direction: column;
  align-items: center;
  gap: 15px;
  padding: 12px 11px 11px;
  background: #ece9d8;
}
.msg {
  align-self: stretch;
  display: flex;
  gap: 18px;
}
.msg svg {
  width: 32px;
  height: 32px;
}
.msg p {
  margin: 0;
  padding-top: 3px;
  font-family: "Liberation Sans", Arial, sans-serif;
  line-height: 13px;
  white-space: nowrap;
}
.ok {
  width: 76px;
  height: 24px;
  border: 1px solid #000;
  box-shadow: inset 1px 1px #fff, inset -1px -1px #716f64, inset -2px -2px #aca899;
}
```
FILE: script.js
```
// [icon, title, opened, children], null = empty line
const nodes = [
  ['bluebook', 'Нормативы', true, [
    ['hammer', 'Расценки'],
    ['truck', 'Машины и механизмы', true, [
      ['folder', 'г. Санкт-Петербург, РЦЦС СПб'],
      ['folder', 'Санкт-Петербург, СПб ГУ Центр мониторинга и экспертизы цен'],
      ['folder', 'Ленинградская область'],
      ['folder', 'Нормативы 2001 года', true, [
        ['folder', 'Ценники на машины и механизмы для норм ГЭСН, ФЕР (номенклатура)'],
        ['folder', 'Ведомственные ценники на машины и механизмы'],
        ['folder', 'Местные нормативы', true, [
          ['folder', 'РЦЦС СПб. Машины для ЭСНр-2001, ЕРр-2001 СПб (на ремонтно-строительные рабо'],
          ['folder', 'РЦЦС СПб. Нормы и расценки на новые технологии в строительстве, часть 2 (цены'],
          ['folder', 'РЦЦС СПб. ЕР-27'],
          null
        ]],
        ['folder', 'Ведомственные нормативы']
      ]],
      ['folder', 'Нормативы 1984 года'],
      ['folder', 'МТСН 81.2-98. СБОРНИК СМЕТНЫХ ЦЕН ЭКСПЛУАТАЦИИ СТРОИТЕЛЬНЫХ МАШИН']
    ]],
    ['bricks', 'Ценники'],
    ['calc', 'Индексы пересчета'],
    ['truckfull', 'Ресурсы']
  ]]
];

const A = 'Администратор';
const K = 'Кислова';

const rows = [
  ['Раздел 1. Автотоцементов...', A, '28.12.07', 35],
  ['Раздел 2. Краны', A, '28.12.07', 169],
  ['Раздел 3. Домкраты, лебе...', A, '28.12.07', 124],
  ['Раздел 4. Электростанции,...', A, '26.11.07', 56],
  ['Раздел 5. Станции компре...', A, '26.11.07', 18],
  ['Раздел 6. Экскаваторы', A, '27.11.07', 79],
  ['Раздел 7. Бульдозеры, скр...', A, '27.11.07', 62],
  ['Раздел 8. Машины для вод...', A, '03.05.07', 37],
  ['Раздел 9. Машины для кул...', A, '27.12.07', 51],
  ['Раздел 10. Оборудование...', A, '27.11.07', 62],
  ['Раздел 11. Машины для п...', A, '27.12.07', 64],
  ['Раздел 12. Машины для д...', A, '27.12.07', 81],
  ['Раздел 13', A, '27.11.07', 68],
  ['Раздел 14', A, '27.11.07', 44],
  ['Раздел 15', A, '27.11.07', 101],
  ['Раздел 16', A, '27.12.07', 18],
  ['Раздел 17', A, '27.12.07', 25],
  ['Раздел 18', A, '03.05.07', 23],
  ['Раздел 19', A, '03.05.07', 10],
  ['Раздел 20. Гидромонитор...', A, '03.05.07', 9],
  ['Раздел 21. Морские плав...', A, '03.05.07', 45],
  ['Раздел 22. Машины и обо...', A, '03.05.07', 4],
  ['Раздел 23. Речные плаву...', A, '26.11.07', 22],
  ['Раздел 24. Машины  для ...', A, '03.05.07', 24],
  ['Раздел 25. Машины для т...', A, '27.12.07', 91],
  ['Раздел 26. Машины для п...', A, '27.12.07', 96],
  ['Раздел 27. Машины для п...', A, '03.05.07', 15],
  ['Раздел 28. Станции замо...', K, '11.08.06', 10],
  ['Раздел 29. Машины для в...', A, '03.05.07', 14],
  ['Раздел 30. Машины и обо...', K, '11.08.06', 23],
  ['Раздел 31. Насосы для в...', A, '27.11.07', 36],
  ['Раздел 32. Машины, при ...', A, '03.05.07', 10],
  ['Раздел 33. Прочие машин...', A, '20.01.08', 140],
  ['Раздел 34. Машины и мех...', A, '27.12.07', 22],
  ['Раздел 35. Машины и мех...', A, '27.11.07', 43],
  ['Раздел 36. Инвентарь дл...', A, '03.05.07', 10],
  ['Сборник 37', A, '27.12.07', 78]
];

function icon(name) {
  return `<svg><use href="#${name}"/></svg>`;
}

function drawTree(list) {
  return '<ul>' + list.map(n => {
    if (!n) return '<li class="gap"></li>';
    const [ico, title, open, kids] = n;
    return `<li><div class="node"><i class="box ${open ? '' : 'plus'}"></i>${icon(ico)}<span>${title}</span></div>${kids ? drawTree(kids) : ''}</li>`;
  }).join('') + '</ul>';
}

document.getElementById('norms').innerHTML = drawTree(nodes);

document.getElementById('rows').innerHTML = rows.map(([name, user, date, count], i) =>
  `<tr><td><div class="item ${i ? '' : 'sel'}">${icon('book')}<span>${i + 1} - ${name}</span></div></td><td>2001</td><td>${i + 1}</td><td>${user}<span class="date">${date}</span></td><td>${count}</td><td></td></tr>`
).join('');
```
